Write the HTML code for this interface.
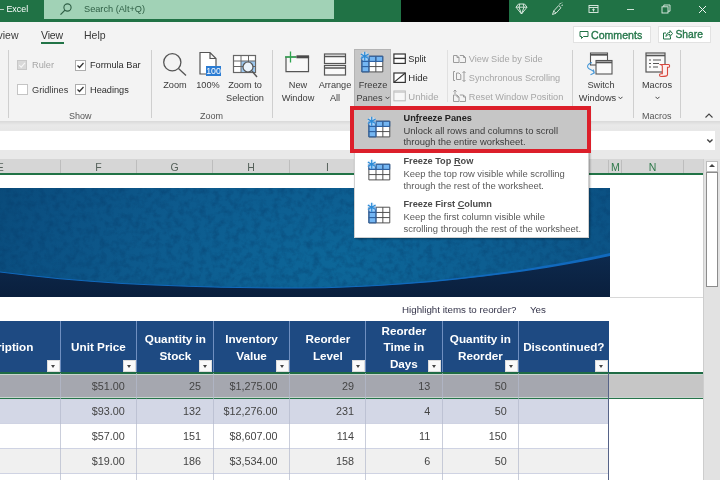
<!DOCTYPE html>
<html><head><meta charset="utf-8">
<style>
html,body{margin:0;padding:0;}
body{width:720px;height:480px;overflow:hidden;position:relative;background:#fff;font-family:"Liberation Sans",sans-serif;color:#333;}
.a{position:absolute;}
.t{position:absolute;white-space:nowrap;font-size:9.2px;line-height:12px;color:#3b3b3b;transform-origin:0 50%;}
.c{text-align:center;transform-origin:50% 50%;}
.dis{color:#a6a6a6;}
.sep{position:absolute;width:1px;background:#cfcfcf;top:50px;height:68px;}
.gl{font-size:9px;color:#555;}
/* sheet */
.hd{position:absolute;top:321px;height:52px;background:#1e4a82;color:#fff;font-weight:bold;font-size:10.900px;line-height:16.500px;padding-top:1px;text-align:center;display:flex;align-items:center;justify-content:center;box-sizing:border-box;border-left:1px solid #6f8fc0;}
.hd span{display:inline-block;transform:scaleX(1.075);}
.fb{position:absolute;width:13px;height:12.500px;background:#fafafa;border:1px solid #dcdcdc;box-sizing:border-box;top:359.500px;}
.fb:after{content:"";position:absolute;left:3px;top:4.500px;border-left:2.700px solid transparent;border-right:2.700px solid transparent;border-top:3px solid #444;}
.cell{position:absolute;height:25px;line-height:27px;font-size:10.800px;color:#444;text-align:right;box-sizing:border-box;}
.ch{position:absolute;top:159.500px;height:14px;line-height:15px;font-size:10.500px;color:#55615a;text-align:center;border-right:1px solid #bdbdbd;box-sizing:border-box;margin-left:0.700px;}
.mt{position:absolute;left:403.500px;white-space:nowrap;font-size:9.430px;line-height:11px;color:#3c3c3c;}
.mb{font-weight:bold;color:#222;font-size:9.200px;}
#w{position:absolute;left:0;top:0;width:720px;height:480px;overflow:hidden;opacity:0.999;}
</style></head><body><div id="w">

<!-- ===== Title bar ===== -->
<div class="a" style="left:0;top:0;width:720px;height:22.500px;background:#207245;"></div>
<div class="a" style="left:44px;top:0;width:289.700px;height:19px;background:#a1d2b6;"></div>
<div class="a" style="left:400.500px;top:0;width:108.500px;height:22px;background:#000;"></div>
<div class="t" style="left:-1px;top:3px;color:#fff;font-size:8.900px;">– Excel</div>
<svg class="a" style="left:59px;top:2px" width="14" height="14" viewBox="0 0 14 14"><circle cx="8.5" cy="5.5" r="3.6" fill="none" stroke="#2f5f45" stroke-width="1.1"/><path d="M6 8.2L1.5 12.7" stroke="#2f5f45" stroke-width="1.2"/></svg>
<div class="t" style="left:84px;top:3px;color:#2f5f45;font-size:9.2px;">Search (Alt+Q)</div>
<!-- title icons -->
<svg class="a" style="left:515px;top:3px" width="13" height="12" viewBox="0 0 13 12" fill="none" stroke="#e4efe8" stroke-width="0.900"><path d="M3.500 1h6l2.500 3.200-5.500 6.800L1 4.200z M1 4.200h11 M4.800 1L4 4.200l2.500 6.800L9 4.200 8.200 1"/></svg>
<svg class="a" style="left:550px;top:2px" width="14" height="14" viewBox="0 0 14 14" fill="none" stroke="#e4efe8" stroke-width="0.900"><path d="M2.500 12.500l1.200-3.500 5-5.500 2.300 2.200-5 5.500z M3.700 9l2.300 2.200 M9.500 2.500l1-1.500 M11.500 3.500l1.500-.5 M11 1.500l1-1"/></svg>
<svg class="a" style="left:588px;top:4px" width="11" height="10" viewBox="0 0 11 10" fill="none" stroke="#e4efe8" stroke-width="0.900"><rect x="1" y="1.500" width="9" height="7"/><path d="M1 3.500h9 M5.500 7.500V5 M4.200 6l1.300-1.200L6.800 6"/></svg>
<div class="a" style="left:626.500px;top:9px;width:7px;height:1px;background:#cfe3d7;"></div>
<svg class="a" style="left:661px;top:4px" width="10" height="10" viewBox="0 0 10 10" fill="none" stroke="#e4efe8" stroke-width="0.900"><rect x="1" y="2.800" width="6" height="6.200"/><path d="M2.800 2.800v-1.800h6.200v6.200h-2"/></svg>
<svg class="a" style="left:698px;top:5px" width="9" height="9" viewBox="0 0 9 9" fill="none" stroke="#f0f6f2" stroke-width="1"><path d="M1 1l7 7M8 1l-7 7"/></svg>

<!-- ===== Tabs + ribbon bg ===== -->
<div class="a" style="left:0;top:22px;width:720px;height:100px;background:#f3f3f3;"></div>
<div class="a" style="left:0;top:121px;width:720px;height:10px;background:linear-gradient(#d9d9d9,#e9e9e9 40%,#e6e6e6);"></div>
<div class="t" style="left:-50px;width:68.500px;text-align:right;top:29px;font-size:10.500px;">Review</div>
<div class="t" style="left:41px;top:29px;font-size:10.500px;letter-spacing:-0.150px;color:#333;">View</div>
<div class="a" style="left:40.500px;top:42.300px;width:23.500px;height:2.200px;background:#217346;"></div>
<div class="t" style="left:84px;top:29px;font-size:10.5px;">Help</div>

<!-- Comments / Share -->
<div class="a" style="left:572.500px;top:26px;width:78px;height:17px;background:#fff;border:1px solid #e2e2e2;box-sizing:border-box;"></div>
<svg class="a" style="left:579px;top:30px" width="10" height="10" viewBox="0 0 10 10" fill="none" stroke="#217346" stroke-width="1"><path d="M1 1.5h8v5H4.5L2.5 8.5v-2H1z"/></svg>
<div class="t" style="left:591px;top:28.500px;font-size:10.600px;color:#26774b;-webkit-text-stroke:0.350px #26774b;">Comments</div>
<div class="a" style="left:657.500px;top:26px;width:53.500px;height:17px;background:#fff;border:1px solid #e2e2e2;box-sizing:border-box;"></div>
<svg class="a" style="left:662px;top:29px" width="11" height="11" viewBox="0 0 11 11" fill="none" stroke="#217346" stroke-width="1"><path d="M4 4H1.5v6h7V7.5 M4 7.5c0-2.5 1.5-4 4-4V1.5l2.5 3L8 7.5V5.500C6 5.500 5 6 4 7.500z"/></svg>
<div class="t" style="left:675.500px;top:28.500px;font-size:10.300px;color:#26774b;-webkit-text-stroke:0.350px #26774b;">Share</div>

<!-- ===== Ribbon: Show group ===== -->
<div class="sep" style="left:8px;"></div>
<div class="a" style="left:17px;top:60px;width:10px;height:10px;background:#d9d9d9;border:1px solid #c8c8c8;box-sizing:border-box;"></div>
<svg class="a" style="left:17px;top:60px" width="10" height="10" viewBox="0 0 10 10" fill="none" stroke="#f6f6f6" stroke-width="1.1"><path d="M2.200 5.200l2 2L8 2.800"/></svg>
<div class="t dis" style="left:32px;top:59px;">Ruler</div>
<div class="a" style="left:17px;top:84px;width:11px;height:11px;background:#fff;border:1px solid #c4c4c4;box-sizing:border-box;"></div>
<div class="t" style="left:32px;top:84px;">Gridlines</div>
<div class="a" style="left:75px;top:60px;width:11px;height:11px;background:#fff;border:1px solid #adadad;box-sizing:border-box;"></div>
<svg class="a" style="left:75px;top:60px" width="11" height="11" viewBox="0 0 11 11" fill="none" stroke="#333" stroke-width="1.250"><path d="M2.500 5.500l2 2L8.500 3"/></svg>
<div class="t" style="left:90px;top:59px;color:#2b2b2b;">Formula Bar</div>
<div class="a" style="left:75px;top:84px;width:11px;height:11px;background:#fff;border:1px solid #adadad;box-sizing:border-box;"></div>
<svg class="a" style="left:75px;top:84px" width="11" height="11" viewBox="0 0 11 11" fill="none" stroke="#333" stroke-width="1.250"><path d="M2.500 5.500l2 2L8.500 3"/></svg>
<div class="t" style="left:90px;top:84px;color:#2b2b2b;">Headings</div>
<div class="t gl" style="left:69px;top:110px;">Show</div>
<div class="sep" style="left:151px;"></div>

<!-- ===== Zoom group ===== -->
<svg class="a" style="left:161px;top:50px" width="28" height="28" viewBox="0 0 28 28" fill="none" stroke="#555" stroke-width="1.3"><circle cx="11.300" cy="12.300" r="8.600"/><path d="M17.500 18.500l7.500 7"/></svg>
<div class="t c" style="left:155px;top:79px;width:40px;">Zoom</div>
<svg class="a" style="left:197px;top:50px" width="26" height="28" viewBox="0 0 26 28"><path d="M3 2.500h10l6 6V24H3z M13 2.500v6h6" fill="#fff" stroke="#555" stroke-width="1.200"/><rect x="9" y="16" width="15" height="10" fill="#2b7cd3"/><text x="16.500" y="24.300" font-size="8.800" fill="#fff" text-anchor="middle" font-family="Liberation Sans, sans-serif">100</text></svg>
<div class="t c" style="left:188px;top:79px;width:40px;">100%</div>
<svg class="a" style="left:232px;top:54px" width="28" height="26" viewBox="0 0 28 26" fill="none"><rect x="1.500" y="1.500" width="22" height="17" fill="#fff" stroke="#666" stroke-width="1.200"/><rect x="9" y="7" width="14" height="11" fill="#9cc7ee"/><path d="M1.500 7h22 M1.500 12.500h22 M9 1.500v17 M16.500 1.500v17" stroke="#666" stroke-width="1"/><circle cx="16" cy="13" r="5" fill="#eaf3fb" stroke="#555" stroke-width="1.200"/><path d="M20 17l5 6" stroke="#555" stroke-width="1.400"/></svg>
<div class="t c" style="left:220px;top:79px;width:50px;">Zoom to</div>
<div class="t c" style="left:220px;top:91.600px;width:50px;">Selection</div>
<div class="t gl" style="left:200px;top:110px;">Zoom</div>
<div class="sep" style="left:272px;"></div>

<!-- ===== Window group ===== -->
<svg class="a" style="left:283px;top:50px" width="28" height="26" viewBox="0 0 28 26" fill="none"><path d="M3 7h22.500v14.700H3z" fill="#f8f8f8" stroke="#555" stroke-width="1.200"/><path d="M13.500 5.300h12.600v3H13.500z" fill="#4a4a4a"/><path d="M7.500 1.500v11 M2 7h11" stroke="#2ea44f" stroke-width="1.300"/></svg>
<div class="t c" style="left:278px;top:79px;width:40px;">New</div>
<div class="t c" style="left:278px;top:91.600px;width:40px;">Window</div>
<svg class="a" style="left:323px;top:51.500px" width="24" height="26" viewBox="0 0 24 26" fill="none" stroke="#555" stroke-width="1.200"><rect x="1.500" y="2" width="21" height="9.500" fill="#fafafa"/><rect x="1.500" y="13.500" width="21" height="9.500" fill="#fafafa"/><path d="M1.500 4.500h21 M1.500 16h21" stroke-width="1.500"/></svg>
<div class="t c" style="left:315px;top:79px;width:40px;">Arrange</div>
<div class="t c" style="left:315px;top:91.600px;width:40px;">All</div>

<!-- Freeze panes button -->
<div class="a" style="left:354px;top:49px;width:36.500px;height:59px;background:#c6c6c6;border:1px solid #b4b4b4;box-sizing:border-box;"></div>
<svg class="a" style="left:358.800px;top:50.800px" width="25.700" height="22.800" viewBox="0 0 27 24">
<rect x="3" y="5.5" width="22" height="16.5" fill="#fff"/>
<rect x="3" y="5.5" width="22" height="5.5" fill="#74b6f3"/>
<rect x="3" y="5.5" width="7.5" height="16.5" fill="#74b6f3"/>
<path d="M3 5.5h22v16.5H3z M3 11h22 M3 16.400h22 M10.500 5.500v16.500 M17.700 5.500v16.500" fill="none" stroke="#4a4a4a" stroke-width="1"/>
<path d="M3 22V5.500h22V11 M3 11h22 M10.500 5.500V22 M17.700 5.500V11 M3 16.400h7.500 M3 22h7.500" fill="none" stroke="#2a63ad" stroke-width="1"/>
<circle cx="6" cy="5.500" r="4.600" fill="#cfe6fb" opacity="0.550"/>
<path d="M6 0.800v9.400 M1.900 3.100l8.200 4.800 M1.900 7.900l8.200-4.800" stroke="#2a8bd8" stroke-width="1.300" fill="none"/>
</svg>
<div class="t c" style="left:353px;top:79px;width:40px;">Freeze</div>
<div class="t c" style="left:353px;top:91.600px;width:40px;">Panes<svg width="5" height="4" viewBox="0 0 5 4" style="margin-left:2px;vertical-align:1px" fill="none" stroke="#444" stroke-width="1"><path d="M0.500 0.800l2 2 2-2"/></svg></div>

<!-- Split / Hide / Unhide -->
<svg class="a" style="left:393px;top:52.500px" width="14" height="12" viewBox="0 0 14 12" fill="none" stroke="#333" stroke-width="1.200"><rect x="0.900" y="1" width="11.400" height="9.400" fill="#fff"/><path d="M0.900 5.400h11.400" stroke-width="1.400"/></svg>
<div class="t" style="left:408.300px;top:53px;color:#2b2b2b;">Split</div>
<svg class="a" style="left:393px;top:71.800px" width="14" height="12" viewBox="0 0 14 12" fill="none" stroke="#333" stroke-width="1.200"><rect x="0.900" y="1" width="11.400" height="9.400" fill="#fff"/><path d="M0.900 10.400L12.300 1"/></svg>
<div class="t" style="left:408.300px;top:72px;color:#2b2b2b;font-size:9.550px;">Hide</div>
<svg class="a" style="left:393px;top:90px" width="14" height="12" viewBox="0 0 14 12" fill="none" stroke="#b8b8b8" stroke-width="1"><rect x="0.900" y="1" width="11.400" height="9.800" fill="#f7f7f7"/><path d="M0.900 2.200h11.400" stroke="#c4c4c4"/></svg>
<div class="t dis" style="left:408.300px;top:91px;font-size:9.550px;">Unhide</div>
<div class="sep" style="left:447px;background:#e0e0e0;height:52px;"></div>

<!-- View side by side etc. -->
<svg class="a" style="left:452px;top:54px" width="15" height="10" viewBox="0 0 15 10" fill="none" stroke="#9c9c9c" stroke-width="1"><path d="M1.500 1.500h3.500l2 2v5H1.500z M5 1.500v2h2 M7.800 1.500h3.700l2 2v5H7.800 M11.500 1.500v2h2"/></svg>
<div class="t dis" style="left:468.800px;top:53px;">View Side by Side</div>
<svg class="a" style="left:452px;top:70px" width="15" height="13" viewBox="0 0 15 13" fill="none" stroke="#9c9c9c" stroke-width="1"><path d="M3 1.500H1.500v9H3 M4.500 3h2.500l1.800 1.800V9.500H4.500z M12 1.500v10 M10.500 3L12 1.500 13.500 3 M10.500 10l1.500 1.500 1.500-1.500"/></svg>
<div class="t dis" style="left:468.800px;top:72px;">Synchronous Scrolling</div>
<svg class="a" style="left:452px;top:89px" width="15" height="14" viewBox="0 0 15 14" fill="none" stroke="#9c9c9c" stroke-width="1"><path d="M1.500 6h3.500l2 2v4.500H1.500z M5 6v2h2 M7.800 6h3.700l2 2v4.500H7.800 M11.500 6v2h2 M3 1v4 M1.500 2.500L3 1l1.500 1.500"/></svg>
<div class="t dis" style="left:468.800px;top:90.700px;">Reset Window Position</div>
<div class="sep" style="left:572px;"></div>

<!-- Switch windows -->
<svg class="a" style="left:586px;top:50px" width="30" height="28" viewBox="0 0 30 28" fill="none"><rect x="4.500" y="3" width="17" height="12" fill="#fafafa" stroke="#555" stroke-width="1.100"/><path d="M4.500 4.800h17" stroke="#555" stroke-width="1.800"/><rect x="10" y="10.500" width="16" height="13.500" fill="#fafafa" stroke="#555" stroke-width="1.100"/><path d="M10 12.400h16" stroke="#555" stroke-width="1.800"/><path d="M6 12.500c-4.500 1.500-5.500 4-3.500 5.800s4.500 1.200 5.500 4.200 M4.500 24.800l3.800-1.800-1-3.500" stroke="#4a9ad8" stroke-width="1.100"/></svg>
<div class="t c" style="left:576px;top:79px;width:50px;">Switch</div>
<div class="t c" style="left:576px;top:91.600px;width:50px;">Windows<svg width="5" height="4" viewBox="0 0 5 4" style="margin-left:2px;vertical-align:1px" fill="none" stroke="#444" stroke-width="1"><path d="M0.500 0.800l2 2 2-2"/></svg></div>
<div class="sep" style="left:633px;"></div>

<!-- Macros -->
<svg class="a" style="left:644px;top:51px" width="28" height="28" viewBox="0 0 28 28" fill="none"><rect x="2" y="2" width="19" height="19" fill="#fafafa" stroke="#555" stroke-width="1.200"/><path d="M2 4.500h19" stroke="#555" stroke-width="1.600"/><path d="M5 9h2 M9 9h8 M5 12.500h2 M9 12.500h6 M5 16h2 M9 16h5" stroke="#555" stroke-width="1"/><path d="M15.500 13.500h9c1.500 0 1.500 2.800 0 2.800h-1v7.200c0 2-2 2-6.500 2-2 0-2-2.800 0-2.800h1.300V15.300c0-1.300-1.500-1.800-2.800-1.800z" fill="#fdeeee" stroke="#d8473d" stroke-width="1.100"/></svg>
<div class="t c" style="left:632px;top:79px;width:50px;">Macros</div>
<div class="t c" style="left:632px;top:91.600px;width:50px;"><svg width="5" height="4" viewBox="0 0 5 4" style="vertical-align:1px" fill="none" stroke="#444" stroke-width="1"><path d="M0.500 0.800l2 2 2-2"/></svg></div>
<div class="t gl" style="left:642px;top:110px;">Macros</div>
<div class="sep" style="left:680px;"></div>
<svg class="a" style="left:704px;top:112px" width="10" height="7" viewBox="0 0 10 7" fill="none" stroke="#444" stroke-width="1.100"><path d="M1.500 5.500L5 2l3.500 3.500"/></svg>

<!-- ===== Formula bar ===== -->
<div class="a" style="left:0;top:130px;width:720px;height:21px;background:#e8e8e8;"></div>
<div class="a" style="left:0;top:131.200px;width:715px;height:18.800px;background:#fff;"></div>
<div class="a" style="left:0;top:150px;width:720px;height:9px;background:#e9e9e9;"></div>
<svg class="a" style="left:706px;top:137.500px" width="8" height="6" viewBox="0 0 8 6" fill="none" stroke="#444" stroke-width="1.400"><path d="M1.300 1.500l2.600 2.600 2.600-2.600"/></svg>

<!-- ===== Column headers ===== -->
<div class="a" style="left:0;top:158.500px;width:703px;height:15.500px;background:#d6d6d6;"></div>
<div class="ch" style="left:-60px;width:120px;text-align:left;padding-left:56px;">E</div>
<div class="ch" style="left:60px;width:76.3px;">F</div>
<div class="ch" style="left:136.3px;width:76.3px;">G</div>
<div class="ch" style="left:212.6px;width:76.4px;">H</div>
<div class="ch" style="left:289px;width:76.4px;">I</div>
<div class="ch" style="left:365.4px;width:76.4px;">J</div>
<div class="ch" style="left:441.8px;width:76.4px;">K</div>
<div class="ch" style="left:518.2px;width:90.5px;">L</div>
<div class="ch" style="left:608.700px;width:12.800px;color:#2f7a4b;">M</div>
<div class="ch" style="left:621.500px;width:61.800px;color:#2f7a4b;">N</div>
<div class="a" style="left:0;top:173.400px;width:703px;height:1.900px;background:#217346;"></div>

<!-- ===== Sheet ===== -->
<div class="a" style="left:0;top:175px;width:703px;height:305px;background:#fff;"></div>
<!-- banner -->
<svg class="a" style="left:0;top:188px" width="610" height="109" viewBox="0 0 610 109">
<defs>
<filter id="nz" x="0" y="0" width="100%" height="100%" color-interpolation-filters="sRGB"><feTurbulence type="fractalNoise" baseFrequency="0.150" numOctaves="4" seed="11" result="n"/><feColorMatrix in="n" type="matrix" values="0 0 0 0 0.020  0 0 0 0 0.220  0 0 0 0 0.400  0 0 0 2.200 -0.900"/><feComposite in2="SourceGraphic" operator="in"/></filter>
<radialGradient id="bg" gradientUnits="userSpaceOnUse" cx="340" cy="80" r="400" gradientTransform="translate(0 35) scale(1 0.500)"><stop offset="0" stop-color="#0d6799"/><stop offset="0.250" stop-color="#0d6194"/><stop offset="0.500" stop-color="#0d5a8d"/><stop offset="0.780" stop-color="#0b5082"/><stop offset="1" stop-color="#094876"/></radialGradient>
<linearGradient id="nv" x1="0" y1="0" x2="0" y2="1"><stop offset="0.600" stop-color="#0d2a4e"/><stop offset="1" stop-color="#0a1f3d"/></linearGradient>
</defs>
<rect width="610" height="109" fill="url(#nv)"/>
<path d="M0 0H610V67C520 87 400 100 300 100C190 100 90 96 0 84Z" fill="url(#bg)"/>
<path d="M0 0H610V67C520 87 400 100 300 100C190 100 90 96 0 84Z" fill="#07426f" opacity="0.360" filter="url(#nz)"/>
<path d="M610 65C520 85.500 400 99.300 300 99.500C190 99.500 90 95.500 0 83.500V84.500C90 96.500 190 100.500 300 100.500C400 100.300 520 87.500 610 68Z" fill="#1169bd"/>
</svg>
<div class="a" style="left:610px;top:297px;width:93px;height:1px;background:#d8d8d8;"></div>

<div class="t" style="left:402px;top:303.500px;font-size:9.750px;color:#34344a;">Highlight items to reorder?</div>
<div class="t" style="left:530px;top:303.500px;font-size:9.750px;color:#34344a;">Yes</div>

<!-- table header -->
<div class="hd" style="left:-60px;width:120px;border-left:none;justify-content:flex-start;padding-left:57px;"><span style="transform-origin:0 50%;">ription</span></div>
<div class="hd" style="left:60px;width:76.3px;"><span>Unit Price</span></div>
<div class="hd" style="left:136.3px;width:76.3px;"><span>Quantity in<br>Stock</span></div>
<div class="hd" style="left:212.6px;width:76.4px;"><span>Inventory<br>Value</span></div>
<div class="hd" style="left:289px;width:76.4px;"><span>Reorder<br>Level</span></div>
<div class="hd" style="left:365.4px;width:76.4px;"><span>Reorder<br>Time in<br>Days</span></div>
<div class="hd" style="left:441.8px;width:76.4px;"><span>Quantity in<br>Reorder</span></div>
<div class="hd" style="left:518.2px;width:90.5px;"><span>Discontinued?</span></div>
<div class="fb" style="left:46.500px;"></div><div class="fb" style="left:122.8px;"></div><div class="fb" style="left:199.1px;"></div><div class="fb" style="left:275.5px;"></div><div class="fb" style="left:351.9px;"></div><div class="fb" style="left:428.3px;"></div><div class="fb" style="left:504.7px;"></div><div class="fb" style="left:595.2px;"></div>

<!-- rows -->
<div class="a" style="left:0;top:373px;width:609px;height:25.500px;background:#a5a7af;"></div>
<div class="a" style="left:609px;top:373px;width:94px;height:25.500px;background:#c6c6c6;"></div>
<div class="a" style="left:0;top:398.500px;width:609px;height:25px;background:#d3d7e6;"></div>
<div class="a" style="left:0;top:448.500px;width:609px;height:25px;background:#f0f0f0;"></div>
<div class="a" style="left:0;top:372px;width:703px;height:1.800px;background:#1f6b45;"></div>
<div class="a" style="left:0;top:373.800px;width:703px;height:0.800px;background:#c9d6cf;"></div>
<div class="a" style="left:0;top:397px;width:703px;height:0.900px;background:#c9d6cf;"></div>
<div class="a" style="left:0;top:397.900px;width:703px;height:1.500px;background:#27744b;"></div>
<div class="a" style="left:0;top:423px;width:609px;height:1px;background:#cfd3e3;"></div>
<div class="a" style="left:0;top:448px;width:609px;height:1px;background:#cfd3e3;"></div>
<div class="a" style="left:0;top:473px;width:609px;height:1px;background:#cfd3e3;"></div>
<!-- col lines -->
<div class="a" style="left:60px;top:373px;width:1px;height:107px;background:#b4b9cc;opacity:.7"></div>
<div class="a" style="left:136.3px;top:373px;width:1px;height:107px;background:#b4b9cc;opacity:.7"></div>
<div class="a" style="left:212.6px;top:373px;width:1px;height:107px;background:#b4b9cc;opacity:.7"></div>
<div class="a" style="left:289px;top:373px;width:1px;height:107px;background:#b4b9cc;opacity:.7"></div>
<div class="a" style="left:365.4px;top:373px;width:1px;height:107px;background:#b4b9cc;opacity:.7"></div>
<div class="a" style="left:441.8px;top:373px;width:1px;height:107px;background:#b4b9cc;opacity:.7"></div>
<div class="a" style="left:518.2px;top:373px;width:1px;height:107px;background:#b4b9cc;opacity:.7"></div>
<div class="a" style="left:608.200px;top:373px;width:1px;height:107px;background:#566388;"></div>

<!-- data -->
<div class="cell" style="left:60px;top:373px;width:64.8px;">$51.00</div><div class="cell" style="left:136.3px;top:373px;width:64.8px;">25</div><div class="cell" style="left:212.6px;top:373px;width:64.9px;">$1,275.00</div><div class="cell" style="left:289px;top:373px;width:64.900px;">29</div><div class="cell" style="left:365.4px;top:373px;width:64.9px;">13</div><div class="cell" style="left:441.8px;top:373px;width:64.9px;">50</div>
<div class="cell" style="left:60px;top:398.1px;width:64.8px;">$93.00</div><div class="cell" style="left:136.3px;top:398.1px;width:64.8px;">132</div><div class="cell" style="left:212.6px;top:398.1px;width:64.9px;">$12,276.00</div><div class="cell" style="left:289px;top:398.1px;width:64.900px;">231</div><div class="cell" style="left:365.4px;top:398.1px;width:64.9px;">4</div><div class="cell" style="left:441.8px;top:398.1px;width:64.9px;">50</div>
<div class="cell" style="left:60px;top:423.1px;width:64.8px;">$57.00</div><div class="cell" style="left:136.3px;top:423.1px;width:64.8px;">151</div><div class="cell" style="left:212.6px;top:423.1px;width:64.9px;">$8,607.00</div><div class="cell" style="left:289px;top:423.1px;width:64.900px;">114</div><div class="cell" style="left:365.4px;top:423.1px;width:64.9px;">11</div><div class="cell" style="left:441.8px;top:423.1px;width:64.9px;">150</div>
<div class="cell" style="left:60px;top:448.1px;width:64.8px;">$19.00</div><div class="cell" style="left:136.3px;top:448.1px;width:64.8px;">186</div><div class="cell" style="left:212.6px;top:448.1px;width:64.9px;">$3,534.00</div><div class="cell" style="left:289px;top:448.1px;width:64.900px;">158</div><div class="cell" style="left:365.4px;top:448.1px;width:64.9px;">6</div><div class="cell" style="left:441.8px;top:448.1px;width:64.9px;">50</div>

<!-- ===== Scrollbar ===== -->
<div class="a" style="left:703px;top:158.500px;width:17px;height:322px;background:#e2e2e2;"></div>
<div class="a" style="left:703px;top:158.500px;width:1px;height:322px;background:#cdcdcd;"></div>
<div class="a" style="left:705.500px;top:161px;width:12.500px;height:11px;background:#fff;border:1px solid #bdbdbd;box-sizing:border-box;"></div>
<div class="a" style="left:708.600px;top:164.300px;border-left:3.200px solid transparent;border-right:3.200px solid transparent;border-bottom:3.600px solid #444;"></div>
<div class="a" style="left:705.700px;top:172px;width:12.200px;height:115px;background:#fff;border:1px solid #8c8c8c;box-sizing:border-box;"></div>

<!-- ===== Dropdown menu ===== -->
<div class="a" style="left:354px;top:108px;width:235px;height:130px;background:#fff;border:1px solid #d0d0d0;box-sizing:border-box;box-shadow:1px 1px 2px rgba(0,0,0,.350);"></div>
<div class="a" style="left:350px;top:106px;width:241px;height:47px;background:#c6c6c6;border:4px solid #dc1f2a;box-sizing:border-box;"></div>

<svg class="a" style="left:365.700px;top:115.5px" width="25.700" height="22.800" viewBox="0 0 27 24">
<rect x="3" y="5.5" width="22" height="16.5" fill="#fff"/>
<rect x="3" y="5.5" width="22" height="5.5" fill="#74b6f3"/>
<rect x="3" y="5.5" width="7.5" height="16.5" fill="#74b6f3"/>
<path d="M3 5.5h22v16.5H3z M3 11h22 M3 16.400h22 M10.500 5.500v16.500 M17.700 5.500v16.500" fill="none" stroke="#4a4a4a" stroke-width="1"/>
<path d="M3 22V5.500h22V11 M3 11h22 M10.500 5.500V22 M17.700 5.500V11 M3 16.400h7.500 M3 22h7.500" fill="none" stroke="#2a63ad" stroke-width="1"/>
<circle cx="6" cy="5.500" r="4.600" fill="#cfe6fb" opacity="0.550"/>
<path d="M6 0.800v9.400 M1.900 3.100l8.200 4.800 M1.900 7.900l8.200-4.800" stroke="#2a8bd8" stroke-width="1.300" fill="none"/>
</svg>
<div class="mt mb" style="top:112.500px;">Un<u>f</u>reeze Panes</div>
<div class="mt" style="top:124.700px;">Unlock all rows and columns to scroll</div>
<div class="mt" style="top:136.200px;">through the entire worksheet.</div>

<svg class="a" style="left:365.700px;top:158.8px" width="25.700" height="22.800" viewBox="0 0 27 24">
<rect x="3" y="5.5" width="22" height="16.5" fill="#fff"/>
<rect x="3" y="5.5" width="22" height="5.5" fill="#74b6f3"/>
<path d="M3 5.5h22v16.5H3z M3 11h22 M3 16.400h22 M10.500 5.500v16.500 M17.700 5.500v16.500" fill="none" stroke="#4a4a4a" stroke-width="1"/>
<path d="M3 11V5.500h22V11H3 M10.500 5.500V11 M17.700 5.500V11" fill="none" stroke="#2a63ad" stroke-width="1"/>
<circle cx="6" cy="5.500" r="4.600" fill="#cfe6fb" opacity="0.550"/>
<path d="M6 0.800v9.400 M1.900 3.100l8.200 4.800 M1.900 7.900l8.200-4.800" stroke="#2a8bd8" stroke-width="1.300" fill="none"/>
</svg>
<div class="mt mb" style="top:155.500px;color:#4a4a4a;">Freeze Top <u>R</u>ow</div>
<div class="mt" style="top:168.200px;color:#5a5a5a;">Keep the top row visible while scrolling</div>
<div class="mt" style="top:180px;color:#5a5a5a;">through the rest of the worksheet.</div>

<svg class="a" style="left:365.700px;top:202.1px" width="25.700" height="22.800" viewBox="0 0 27 24">
<rect x="3" y="5.5" width="22" height="16.5" fill="#fff"/>
<rect x="3" y="5.5" width="7.5" height="16.5" fill="#74b6f3"/>
<path d="M3 5.5h22v16.5H3z M3 11h22 M3 16.400h22 M10.500 5.500v16.500 M17.700 5.500v16.500" fill="none" stroke="#4a4a4a" stroke-width="1"/>
<path d="M3 5.500h7.500V22H3z M3 11h7.500 M3 16.400h7.500" fill="none" stroke="#2a63ad" stroke-width="1"/>
<circle cx="6" cy="5.500" r="4.600" fill="#cfe6fb" opacity="0.550"/>
<path d="M6 0.800v9.400 M1.900 3.100l8.200 4.800 M1.900 7.900l8.200-4.800" stroke="#2a8bd8" stroke-width="1.300" fill="none"/>
</svg>
<div class="mt mb" style="top:199px;color:#4a4a4a;">Freeze First <u>C</u>olumn</div>
<div class="mt" style="top:211px;color:#5a5a5a;">Keep the first column visible while</div>
<div class="mt" style="top:223.200px;color:#5a5a5a;">scrolling through the rest of the worksheet.</div>

</div></body></html>
